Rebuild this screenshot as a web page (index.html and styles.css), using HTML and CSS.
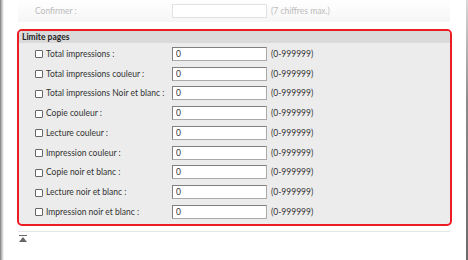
FILE: index.html
```html
<!DOCTYPE html>
<html lang="fr">
<head>
    <meta charset="UTF-8">
    <meta name="viewport" content="width=device-width, initial-scale=1.0">
    <title>Limite pages</title>
    <link rel="stylesheet" href="styles.css">
</head>
<body>
    <div class="screen">
        <div class="edge-left"></div>
        <div class="content">
            <div class="faded-row">
                <span class="label">Confirmer :</span>
                <input type="text" class="field faded">
                <span class="hint">(7 chiffres max.)</span>
            </div>

            <div class="limit-box">
                <div class="box-title">Limite pages</div>
                <div class="box-body">
                    <div class="limit-row">
                        <label class="check"><input type="checkbox"> Total impressions :</label>
                        <input type="text" class="field" value="0">
                        <span class="range">(0-999999)</span>
                    </div>
                    <div class="limit-row">
                        <label class="check"><input type="checkbox"> Total impressions couleur :</label>
                        <input type="text" class="field" value="0">
                        <span class="range">(0-999999)</span>
                    </div>
                    <div class="limit-row">
                        <label class="check"><input type="checkbox"> Total impressions Noir et blanc :</label>
                        <input type="text" class="field" value="0">
                        <span class="range">(0-999999)</span>
                    </div>
                    <div class="limit-row">
                        <label class="check"><input type="checkbox"> Copie couleur :</label>
                        <input type="text" class="field" value="0">
                        <span class="range">(0-999999)</span>
                    </div>
                    <div class="limit-row">
                        <label class="check"><input type="checkbox"> Lecture couleur :</label>
                        <input type="text" class="field" value="0">
                        <span class="range">(0-999999)</span>
                    </div>
                    <div class="limit-row">
                        <label class="check"><input type="checkbox"> Impression couleur :</label>
                        <input type="text" class="field" value="0">
                        <span class="range">(0-999999)</span>
                    </div>
                    <div class="limit-row">
                        <label class="check"><input type="checkbox"> Copie noir et blanc :</label>
                        <input type="text" class="field" value="0">
                        <span class="range">(0-999999)</span>
                    </div>
                    <div class="limit-row">
                        <label class="check"><input type="checkbox"> Lecture noir et blanc :</label>
                        <input type="text" class="field" value="0">
                        <span class="range">(0-999999)</span>
                    </div>
                    <div class="limit-row">
                        <label class="check"><input type="checkbox"> Impression noir et blanc :</label>
                        <input type="text" class="field" value="0">
                        <span class="range">(0-999999)</span>
                    </div>
                </div>
            </div>

            <div class="divider"></div>
            <a class="to-top" href="#">
                <svg width="8" height="7" viewBox="0 0 8 7">
                    <rect x="0" y="0" width="8" height="1" fill="#666"/>
                    <polygon points="4,2 8,7 0,7" fill="#666"/>
                </svg>
            </a>
        </div>
        <div class="edge-right"></div>
    </div>
</body>
</html>
```

FILE: styles.css
```css
body {
    margin: 0;
    font-family: Lato, "Open Sans", sans-serif;
    font-size: 8.5px;
    color: #333;
    background: #fff;
}
.screen {
    display: flex;
    width: 468px;
    height: 260px;
    overflow: hidden;
}
.edge-left {
    width: 4px;
    background: linear-gradient(to right, #7a7a7a, #c8c8c8 50%, #fff);
}
.edge-right {
    width: 2px;
    margin-left: 14px;
    background: linear-gradient(to bottom, #d8d8d8, #8a8a8a 40%, #6a6a6a);
}
.content {
    flex: 1;
    padding-left: 13px;
}
.faded-row {
    display: flex;
    align-items: center;
    height: 22px;
    margin-left: 1px;
    margin-right: 2px;
    padding-left: 17px;
    background: linear-gradient(to bottom, #fff, #f6f6f6);
    color: #bbb;
}
.faded-row .label {
    width: 137px;
}
.field {
    box-sizing: border-box;
    width: 95px;
    height: 14px;
    margin: 0;
    padding: 0 3px;
    font-family: inherit;
    font-size: 8.5px;
    color: #333;
    background: #fff;
    border: 1px solid #aaa;
    border-top-color: #808080;
    border-left-color: #808080;
    border-radius: 0;
}
.field.faded {
    border-color: #e2e2e2;
}
.hint, .range {
    margin-left: 4px;
}
.limit-box {
    margin-top: 7px;
    width: 435px;
    box-sizing: border-box;
    border: 2px solid #ec1c24;
    border-radius: 5px;
    background: #ececec;
    overflow: hidden;
}
.box-title {
    height: 12px;
    line-height: 12px;
    padding-left: 3px;
    font-weight: bold;
    color: #222;
    background: #dadada;
}
.box-body {
    padding: 1px 0 2px;
}
.limit-row {
    display: flex;
    align-items: center;
    height: 19.75px;
}
.check {
    display: flex;
    align-items: center;
    width: 137px;
    padding-left: 16px;
}
.check input {
    appearance: none;
    box-sizing: border-box;
    width: 8px;
    height: 8px;
    margin: 1px 3px 0 0;
    background: #fff;
    border: 1px solid #666;
    border-radius: 1px;
}
.range {
    color: #333;
}
.divider {
    margin: 5px 2px 0 1px;
    height: 1px;
    background: #e6e6e6;
}
.to-top {
    display: block;
    width: 8px;
    margin: 3px 0 0 2px;
    line-height: 0;
}
```
